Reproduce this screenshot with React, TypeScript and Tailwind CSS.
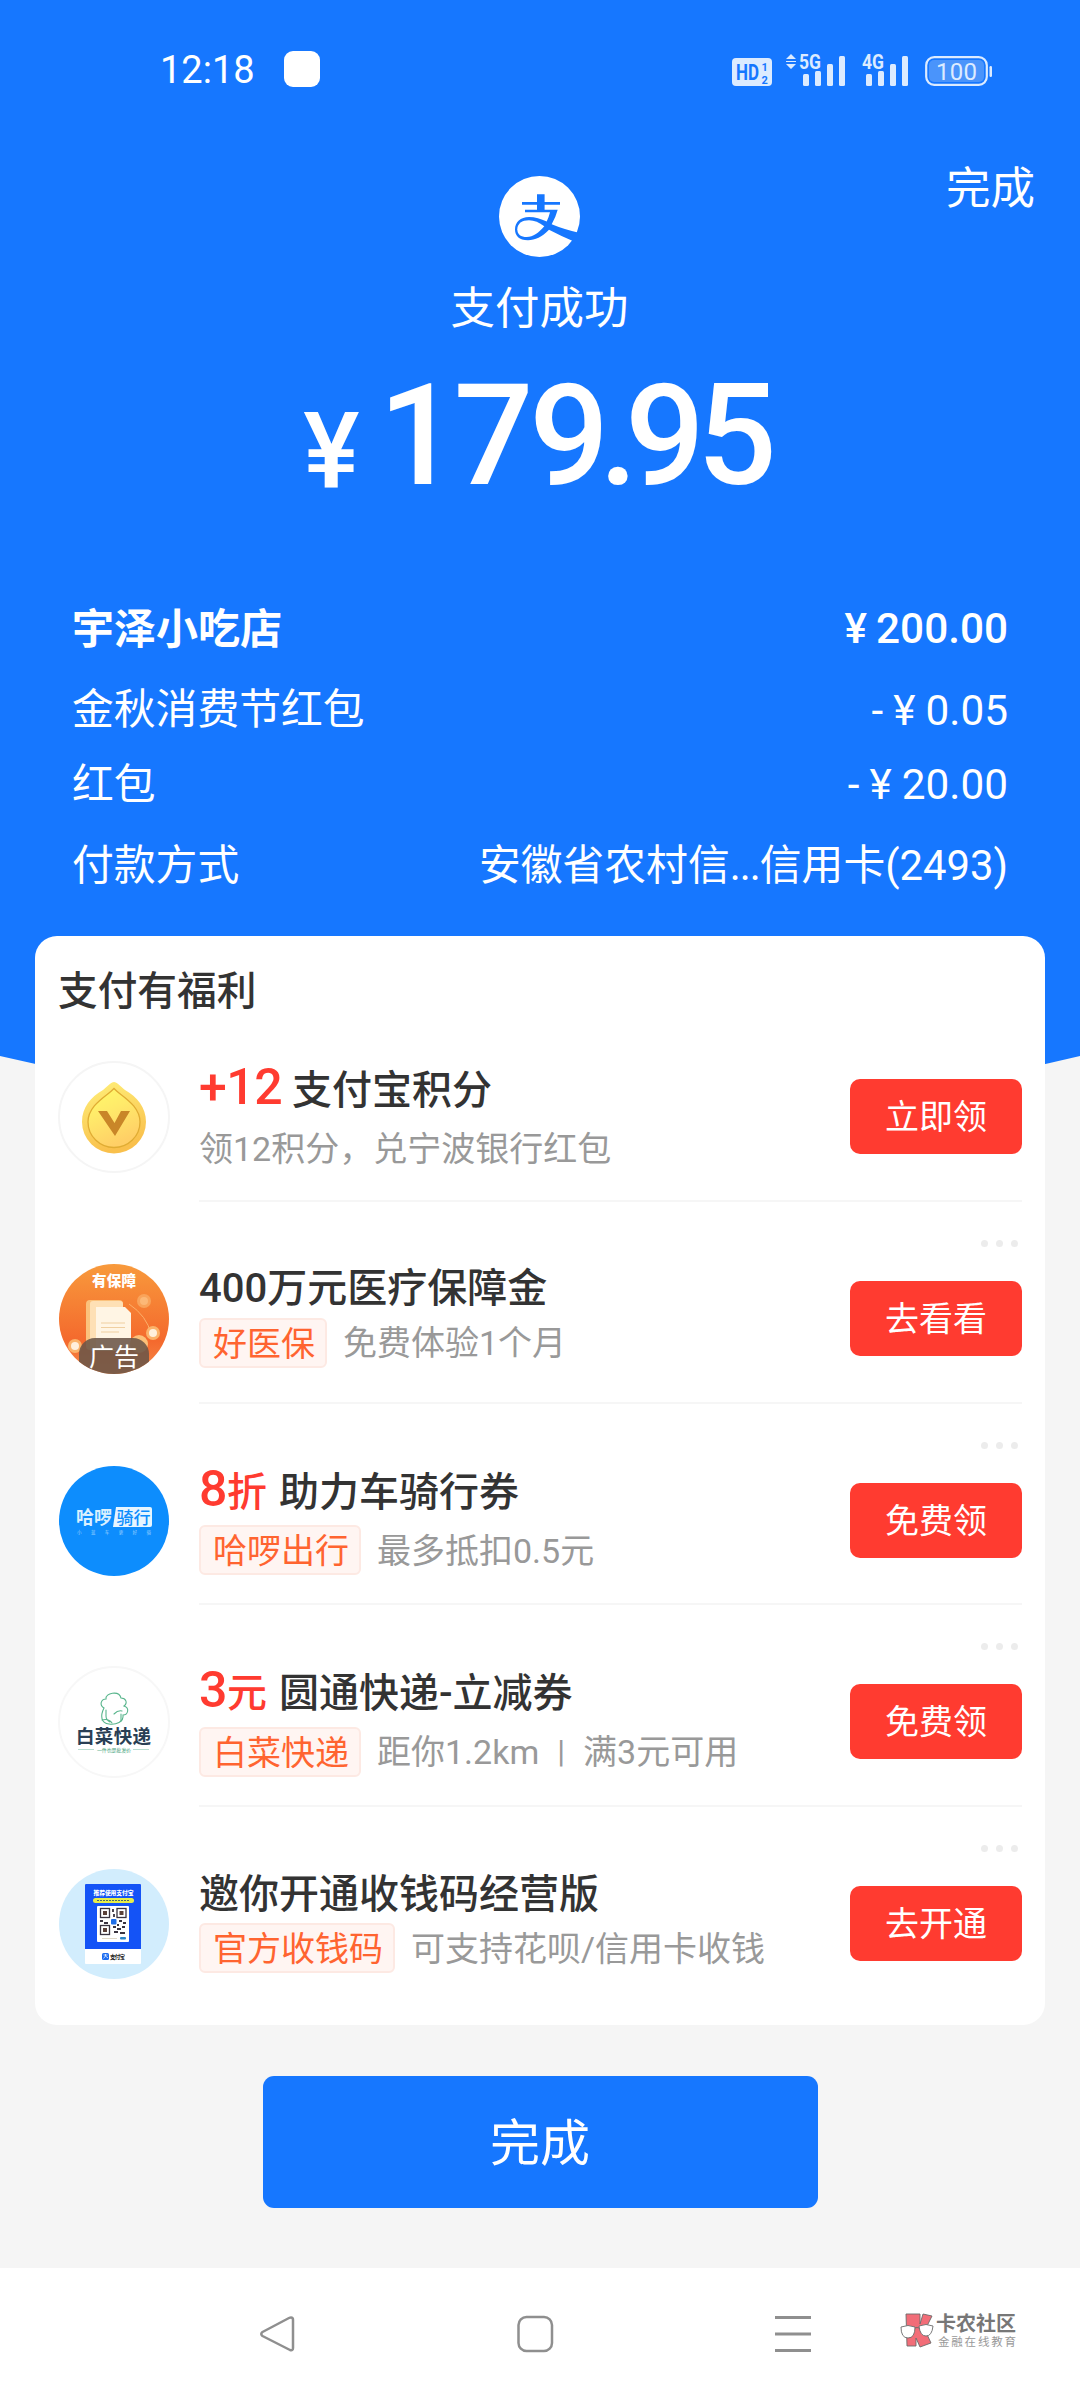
/**
 * Payment Success View
 * Shows the paid amount, the order details and the list of rewards
 */

import React from 'react';

const CJK = "Roboto, 'Noto Sans CJK SC', sans-serif";

interface Reward {
  id: string;
  icon: React.ReactNode;
  highlight?: string;
  highlightUnit?: string;
  title: string;
  tag?: string;
  description: string[];
  action: string;
}

/* ---------- Status bar ---------- */

const SignalBars: React.FC<{ label: string; arrows?: boolean }> = ({ label, arrows }) => (
  <svg className="overflow-visible" width="62" height="34" viewBox="0 0 62 34" fill="#dcebff">
    {arrows && <path d="M6 2l5 5H1zM6 17l5-5H1zM1 9h10v1H1z" />}
    <text
      x="14"
      y="17"
      fontSize="21"
      fontWeight="700"
      textLength="22"
      lengthAdjust="spacingAndGlyphs"
      fontFamily={CJK}
    >
      {label}
    </text>
    <rect x="18" y="22" width="6" height="12" rx="1.5" />
    <rect x="30" y="19" width="6" height="15" rx="1.5" />
    <rect x="42" y="12" width="6" height="22" rx="1.5" />
    <rect x="54" y="4" width="6" height="30" rx="1.5" />
  </svg>
);

const StatusBar: React.FC = () => (
  <div className="flex h-[138px] items-center justify-between pl-[160px] pr-[87px]">
    <div className="flex items-center gap-[29px]">
      <span className="pt-[2px] text-[38px] leading-[44px] text-white">12:18</span>
      <span className="h-[36px] w-[36px] rounded-[9px] bg-white" />
    </div>
    <div className="flex items-end">
      <svg width="40" height="28" viewBox="0 0 40 28">
        <rect width="40" height="28" rx="4" fill="#dcebff" />
        <g fill="#1677ff" fontFamily={CJK} fontWeight="700">
          <text x="4" y="22" fontSize="22.500" textLength="23" lengthAdjust="spacingAndGlyphs">HD</text>
          <text x="29.500" y="12.500" fontSize="11">1</text>
          <text x="29.500" y="25.500" fontSize="11">2</text>
        </g>
      </svg>
      <div className="ml-[13px]">
        <SignalBars label="5G" arrows />
      </div>
      <div className="ml-px">
        <SignalBars label="4G" />
      </div>
      <svg className="ml-[15px]" width="68" height="30" viewBox="0 0 68 30">
        <rect x="1.200" y="1.200" width="60.600" height="27.600" rx="8" fill="none" stroke="#dcebff" strokeWidth="2.200" />
        <rect x="4" y="4" width="55" height="22" rx="5" fill="#4a94fb" />
        <rect x="64.500" y="10" width="2.500" height="11" rx="1.200" fill="#dcebff" />
        <text x="11" y="23.500" fontSize="24" textLength="41" fill="#dcebff" fontFamily={CJK}>
          100
        </text>
      </svg>
    </div>
  </div>
);

/* Round brand mark, the long stroke runs out through the edge of the disc */
const PayLogo: React.FC = () => (
  <svg width="81" height="81" viewBox="0 0 81 81">
    <circle cx="40.500" cy="40.500" r="40.500" fill="#fff" />
    <g fill="#1677ff">
      <path d="M38 18.300h7.600V26H61v2.800H45.600v5H58.700q-2 7.500-6 14.400Q64 53 81 57v12L72.700 64.600Q62 60 50 53.800C43 61 36 64.300 29 64.300 20 64.300 16 59.500 16 53.500 16 46 21.500 41 30 41c6 0 12 1.900 17.700 4.600q2-4 3.300-9.300H26v-2.600H38v-5H23V26h15z" />
    </g>
    <path d="M45.300 50.200C40 46.500 35.500 44.200 30 44.200 23 44.200 18.300 47.500 18.300 53.200 18.300 58.500 22 61 27.700 61 34 61 40 56.500 45.300 50.200z" fill="#fff" />
  </svg>
);

/* ---------- Reward icons ---------- */

const CoinIcon: React.FC = () => (
  <svg width="112" height="112" viewBox="0 0 112 112">
    <defs>
      <linearGradient id="coin" x1="0" y1="0" x2="0.3" y2="1">
        <stop offset="0" stopColor="#fff07a" />
        <stop offset="1" stopColor="#f9c04c" />
      </linearGradient>
      <linearGradient id="coinInner" x1="0" y1="0" x2="0.4" y2="1">
        <stop offset="0" stopColor="#fffb6a" />
        <stop offset="0.45" stopColor="#ffea6a" />
        <stop offset="1" stopColor="#ffcf66" />
      </linearGradient>
    </defs>
    <circle cx="56" cy="56" r="55" fill="#fff" stroke="#f5f5f5" strokeWidth="2" />
    <path
      d="M56 21c3 0 6 4 11 8 12 7 21 17 21 32a32 31.500 0 0 1-64 0c0-15 9-25 21-32 5-4 8-8 11-8z"
      fill="url(#coin)"
    />
    <path
      d="M56 27.500c6 7 26 16 26 33.500a26 25.500 0 0 1-52 0c0-17.500 20-26.500 26-33.500z"
      fill="url(#coinInner)"
      stroke="#e0ac33"
      strokeWidth="1.300"
    />
    <path d="M40 50h9l7.500 12L63 50h9L57 75z" fill="#c98628" />
  </svg>
);

const InsuranceIcon: React.FC = () => (
  <svg width="110" height="110" viewBox="0 0 110 110">
    <defs>
      <clipPath id="insClip">
        <circle cx="55" cy="55" r="55" />
      </clipPath>
      <linearGradient id="insBg" x1="0" y1="0" x2="0" y2="1">
        <stop offset="0" stopColor="#f89a3c" />
        <stop offset="0.7" stopColor="#f4692d" />
        <stop offset="1" stopColor="#f58a48" />
      </linearGradient>
    </defs>
    <g clipPath="url(#insClip)">
      <rect width="110" height="110" fill="url(#insBg)" />
      <path d="M70 40q18 12 22 30" stroke="#fbb06a" strokeWidth="1" fill="none" />
      <rect x="27" y="36" width="37" height="50" rx="4" fill="#fbc27c" />
      <rect x="31" y="37" width="33" height="50" rx="3" fill="#fee0b5" />
      <path d="M37 43h29l6 6v36H37z" fill="#fff5e4" />
      <path d="M42 59h24M42 63.500h24M42 68h18" stroke="#f0cfa0" strokeWidth="1.200" />
      <circle cx="85" cy="37" r="7" fill="#f9a35a" />
      <circle cx="85" cy="37" r="4" fill="#fcb877" />
      <circle cx="94" cy="69" r="7" fill="#fbb36b" />
      <circle cx="94" cy="69" r="4" fill="#fff0dc" />
      <circle cx="16" cy="82" r="7" fill="#fbb36b" />
      <circle cx="16" cy="82" r="4" fill="#fff0dc" />
      <circle cx="80" cy="80" r="9" fill="#fcc078" />
      <text
        x="33"
        y="21.500"
        fontSize="14.500"
        fontWeight="900"
        fill="#fff"
        textLength="44"
        fontFamily={CJK}
      >
        有保障
      </text>
      <path d="M20 110V90a16 16 0 0 1 16-16h38a16 16 0 0 1 16 16v20z" fill="#6b5548" fillOpacity="0.880" />
      <text x="30" y="102" fontSize="25" fill="#fff" textLength="50" fontFamily={CJK}>
        广告
      </text>
    </g>
  </svg>
);

const BikeIcon: React.FC = () => (
  <svg width="110" height="110" viewBox="0 0 110 110">
    <circle cx="55" cy="55" r="55" fill="#0d8dfd" />
    <text x="17" y="58" fontSize="18" fontWeight="700" fill="#d9f0ff" textLength="36" fontFamily={CJK}>
      哈啰
    </text>
    <path d="M57 41h34a2 2 0 0 1 2 2v16a2 2 0 0 1-2 2H54z" fill="#e6f5ff" />
    <text x="57.500" y="57.500" fontSize="17" fontWeight="500" fill="#0d8dfd" textLength="34" fontFamily={CJK}>
      骑行
    </text>
    <text x="18" y="68" fontSize="4.500" fill="#9fd3ff" textLength="74" fontFamily={CJK}>
      小蓝车更好骑
    </text>
  </svg>
);

const CabbageIcon: React.FC = () => (
  <svg width="112" height="112" viewBox="0 0 112 112">
    <circle cx="56" cy="56" r="55" fill="#fff" stroke="#f7f7f7" strokeWidth="2" />
    <g fill="none" stroke="#58b58c" strokeWidth="1.100" strokeLinecap="round">
      <path d="M46 42c-5-3-3-9 2-9-1-6 13-9 15-1 5 0 7 5 3 8 6 2 4 9-1 9 1 7-7 10-14 9-8-1-9-8-5-16z" />
      <path d="M48 44v6q0 4 4 6M56 48q4-4 8-3M63 48v7M44 54c4-1 8 0 10 3" />
    </g>
    <text x="18" y="77" fontSize="18.500" fontWeight="700" fill="#2a3f55" textLength="75" fontFamily={CJK}>
      白菜快递
    </text>
    <path d="M20 83.500h16M75 83.500h16" stroke="#b9ddd0" strokeWidth="1" />
    <text x="39" y="85.500" fontSize="5" fill="#3f9f7a" textLength="34" fontFamily={CJK}>
      一件也是批发价
    </text>
  </svg>
);

const QrIcon: React.FC = () => (
  <svg width="110" height="110" viewBox="0 0 110 110">
    <circle cx="55" cy="55" r="55" fill="#d2edfd" />
    <rect x="26" y="15" width="56" height="80" rx="1" fill="#fff" />
    <path d="M27 15h54a1 1 0 0 1 1 1v64H26V16a1 1 0 0 1 1-1z" fill="#1453f6" />
    <text x="34.500" y="26" fontSize="5.800" fontWeight="900" fill="#fff" textLength="40" fontFamily={CJK}>
      推荐使用支付宝
    </text>
    <rect x="34" y="29" width="41" height="5" rx="2.500" fill="#e8ee4a" />
    <path d="M38 31.500h33" stroke="#4a6a6a" strokeWidth="1.200" strokeDasharray="2 1" />
    <rect x="38" y="37" width="32" height="36" rx="1" fill="#fff" />
    <g fill="none" stroke="#3a3440" strokeWidth="1.300">
      <rect x="41.500" y="39.500" width="9" height="9" />
      <rect x="58" y="39.500" width="9" height="9" />
      <rect x="41.500" y="56.500" width="9" height="9" />
    </g>
    <g fill="#5a4038">
      <rect x="44" y="42" width="4" height="4" />
      <rect x="60.500" y="42" width="4" height="4" />
      <rect x="44" y="59" width="4" height="4" />
    </g>
    <path
      d="M54 40v3M55 45v3M41 52h3M45 54h4M60 52h3M64 54h3M54 58h3M58 60h4M63 58h3M55 63h4M61 64h5M58 56h2"
      stroke="#3a3440"
      strokeWidth="1.800"
    />
    <rect x="52" y="50" width="5.500" height="5.500" rx="1" fill="#1f6fe8" />
    <path d="M43 69.500h15" stroke="#e0d8c8" strokeWidth="1" />
    <rect x="61" y="68" width="6" height="2.500" rx="1" fill="#2a86c8" />
    <rect x="43" y="84" width="7" height="7" rx="1.500" fill="#1b6cf0" />
    <path d="M44.500 86h4M46.500 85v2l-2 2.500M46.500 87l2.500 2" stroke="#fff" strokeWidth="0.700" fill="none" />
    <text x="51" y="89.700" fontSize="5.500" fontWeight="700" fill="#222" textLength="15" fontFamily={CJK}>
      支付宝
    </text>
  </svg>
);

/* ---------- Data ---------- */

const REWARDS: Reward[] = [
  {
    id: 'points',
    icon: <CoinIcon />,
    highlight: '+12',
    title: '支付宝积分',
    description: ['领12积分，兑宁波银行红包'],
    action: '立即领',
  },
  {
    id: 'insurance',
    icon: <InsuranceIcon />,
    title: '400万元医疗保障金',
    tag: '好医保',
    description: ['免费体验1个月'],
    action: '去看看',
  },
  {
    id: 'bike',
    icon: <BikeIcon />,
    highlight: '8',
    highlightUnit: '折',
    title: '助力车骑行券',
    tag: '哈啰出行',
    description: ['最多抵扣0.5元'],
    action: '免费领',
  },
  {
    id: 'express',
    icon: <CabbageIcon />,
    highlight: '3',
    highlightUnit: '元',
    title: '圆通快递-立减券',
    tag: '白菜快递',
    description: ['距你1.2km', '满3元可用'],
    action: '免费领',
  },
  {
    id: 'merchant',
    icon: <QrIcon />,
    title: '邀你开通收钱码经营版',
    tag: '官方收钱码',
    description: ['可支持花呗/信用卡收钱'],
    action: '去开通',
  },
];

/* ---------- Sections ---------- */

const RewardRow: React.FC<{ reward: Reward; first: boolean; last: boolean }> = ({ reward, first, last }) => (
  <div className={`flex ${first ? 'h-[181px]' : 'h-[201.5px]'}`}>
    <div className={`flex w-[141px] shrink-0 ${first ? 'pt-[40px]' : 'pt-[61px]'}`}>
      <div className="flex h-[112px] w-[112px] items-center justify-center">{reward.icon}</div>
    </div>
    <div className={`flex flex-1 justify-between ${last ? '' : 'border-b-2 border-[#f6f6f6]'}`}>
      <div className={first ? 'pt-[38px]' : reward.highlight ? 'pt-[57px]' : last ? 'pt-[60px]' : 'pt-[59px]'}>
        <div className="flex h-[56px] items-baseline whitespace-nowrap text-[40px] font-medium leading-[56px] text-[#333]">
          {reward.highlight && (
            <span className={`text-[#ff3b30] ${reward.highlightUnit ? 'mr-[12px]' : 'mr-[10px]'}`}>
              <span className="text-[50px] tracking-[-0.500px]">{reward.highlight}</span>
              {reward.highlightUnit}
            </span>
          )}
          {reward.title}
        </div>
        <div
          className={`flex items-center whitespace-nowrap text-[34px] leading-[53px] text-[#999] ${
            !reward.tag ? 'mt-[6px]' : reward.highlight ? 'mt-[6px]' : '-mt-[2px]'
          }`}
        >
          {reward.tag && (
            <span className="mr-[16px] h-[50px] rounded-[6px] border-2 border-[#fde9e3] bg-[#fff5f2] pl-[12px] pr-[10px] leading-[49px] text-[#ff6430]">
              {reward.tag}
            </span>
          )}
          {reward.description.map((part, i) => (
            <React.Fragment key={part}>
              {i > 0 && <span className="mx-[18px] text-[32px]">|</span>}
              <span className="pt-[2px]">{part}</span>
            </React.Fragment>
          ))}
        </div>
      </div>
      <div className={`flex flex-col items-end ${first ? 'pt-[58px]' : ''}`}>
        {!first && (
          <div className="flex h-[79px] gap-[8px] pr-[4px] pt-[38px]">
            <span className="h-[7px] w-[7px] rounded-full bg-[#ececec]" />
            <span className="h-[7px] w-[7px] rounded-full bg-[#ececec]" />
            <span className="h-[7px] w-[7px] rounded-full bg-[#ececec]" />
          </div>
        )}
        <button className="h-[75px] w-[172px] rounded-[10px] bg-[#ff3b30] pt-px text-[34px] leading-[75px] text-white">
          {reward.action}
        </button>
      </div>
    </div>
  </div>
);

const NavBar: React.FC = () => (
  <nav className="flex h-[132px] items-center bg-white pl-[259px]">
    <svg width="36" height="38" viewBox="0 0 36 38" fill="none" stroke="#8f8f8f" strokeWidth="2.500">
      <path d="M32 2.500q2 0 2 2.500v28q0 3-3 2L3.500 21q-2.500-2 0-4L30 3q1-.5 2-.5z" strokeLinejoin="round" />
    </svg>
    <svg className="ml-[221px]" width="38" height="38" viewBox="0 0 38 38" fill="none" stroke="#8f8f8f" strokeWidth="2.500">
      <rect x="2.500" y="2" width="33.500" height="34" rx="8" />
    </svg>
    <svg className="ml-[221px]" width="36" height="38" viewBox="0 0 36 38" stroke="#8f8f8f" strokeWidth="3">
      <path d="M0 2.500h36M0 19h36M0 35.500h36" />
    </svg>
    {/* Community mark in the corner */}
    <div className="ml-[88px] flex -translate-y-[3px] items-center">
      <svg width="36" height="38" viewBox="0 0 36 38" stroke="#6b6b6b" strokeWidth="0.900">
        <path d="M7 2h14v10l3-10 9 2-7 14 6 13-11 4-4-9v8H8z" fill="#f26d78" />
        <path d="M2 15q7-3 14 0 0 11-7 11T2 15zM20 14q7-3 14 0-1 10-7 10t-7-10z" fill="#fff" />
        <path d="M16 16q2-1 4 0" fill="none" />
      </svg>
      <div className="ml-px pt-px text-[#777]">
        <p className="text-[20px] font-bold leading-[21px]">卡农社区</p>
        <p className="pl-[2px] text-[11.500px] leading-[15px] tracking-[1.800px] text-[#999]">金融在线教育</p>
      </div>
    </div>
  </nav>
);

export default function App() {
  return (
    <div className="flex min-h-[2400px] w-[1080px] flex-col overflow-hidden bg-[#f5f5f5] font-[Roboto,'Noto_Sans_CJK_SC',sans-serif]">
      {/* Header */}
      <header className="h-[1055px] shrink-0 bg-[#1677ff] text-white">
        <StatusBar />
        <div className="grid grid-cols-3">
          <span />
          <div className="flex flex-col items-center pr-px pt-[38px]">
            <PayLogo />
            <p className="mt-[22px] text-[44.500px] leading-[60px]">支付成功</p>
          </div>
          <p className="pr-[45px] pt-[20px] text-right text-[44.500px] leading-[62px]">完成</p>
        </div>

        {/* Amount */}
        <div className="mt-[27px] flex h-[140px] items-baseline justify-center font-medium leading-[140px]">
          <span className="mr-[19px] translate-y-[4px] text-[106px]">¥</span>
          <span className="mr-[8px] text-[140.500px]">
            <span className="tracking-[-4.500px]">17</span>
            <span className="tracking-[-10px]">9</span>
            <span className="tracking-[-13px]">.</span>
            <span className="tracking-[-8px]">95</span>
          </span>
        </div>

        {/* Order details */}
        <div className="mt-[83px] pl-[72px] pr-[72px] text-[41.800px]">
          <div className="flex h-[80px] items-center justify-between font-medium">
            <span className="text-[42px] font-bold">宇泽小吃店</span>
            <span className="flex gap-[9px] text-[42.300px]">
              <span>¥</span>200.00
            </span>
          </div>
          <div className="flex h-[82px] items-center justify-between pt-px">
            <span>金秋消费节红包</span>
            <span className="flex gap-[10px] text-[42.300px]">
              <span>-</span>
              <span>¥</span>0.05
            </span>
          </div>
          <div className="flex h-[68px] items-center justify-between">
            <span>红包</span>
            <span className="flex gap-[10px] text-[42.300px]">
              <span>-</span>
              <span>¥</span>20.00
            </span>
          </div>
          <div className="flex h-[94px] items-center justify-between pt-px">
            <span>付款方式</span>
            <span>
              安徽省农村信<span className="tracking-[-1px]">...</span>信用卡(2493)
            </span>
          </div>
        </div>
      </header>
      <svg className="shrink-0" width="1080" height="60" viewBox="0 0 1080 60">
        <path d="M0 0H1080V1Q540 130 0 1z" fill="#1677ff" />
      </svg>

      {/* Rewards */}
      <section className="relative mx-[35px] -mt-[179px] h-[1089px] shrink-0 rounded-[22px] bg-white px-[23px]">
        <h2 className="h-[85px] pt-[27px] text-[39.700px] font-medium leading-[58px] text-[#333]">支付有福利</h2>
        {REWARDS.map((reward, i) => (
          <RewardRow key={reward.id} reward={reward} first={i === 0} last={i === REWARDS.length - 1} />
        ))}
      </section>

      <button className="mx-auto mt-[51px] h-[132px] w-[555px] shrink-0 rounded-[11px] bg-[#1677ff] pt-[5px] text-[50px] text-white">
        完成
      </button>
      <div className="flex-1" />
      <NavBar />
    </div>
  );
}
